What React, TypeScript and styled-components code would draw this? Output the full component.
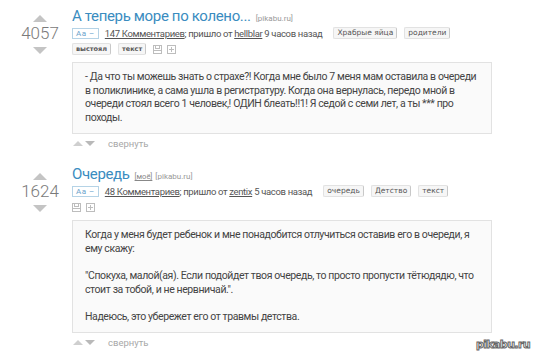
import React from "react";
import styled, { createGlobalStyle } from "styled-components";

const GlobalStyle = createGlobalStyle`
  html, body {
    margin: 0;
    padding: 0;
    background: #fff;
  }
  body {
    font-family: Roboto, "Liberation Sans", Arial, sans-serif;
    width: 535px;
    height: 357px;
    overflow: hidden;
  }
`;

type Tag = { label: string; bold?: boolean };

type PostData = {
  rating: string;
  title: string;
  mine?: boolean;
  comments: string;
  author: string;
  time: string;
  tags: Tag[];
  extraTags: Tag[];
  paragraphs: string[];
};

const posts: PostData[] = [
  {
    rating: "4057",
    title: "А теперь море по колено...",
    comments: "147 Комментариев",
    author: "hellblar",
    time: "9 часов назад",
    tags: [{ label: "Храбрые яйца" }, { label: "родители" }],
    extraTags: [{ label: "выстоял", bold: true }, { label: "текст", bold: true }],
    paragraphs: [
      "- Да что ты можешь знать о страхе?! Когда мне было 7 меня мам оставила в очереди в поликлинике, а сама ушла в регистратуру. Когда она вернулась, передо мной в очереди стоял всего 1 человек,! ОДИН блеать!!1! Я седой с семи лет, а ты *** про походы.",
    ],
  },
  {
    rating: "1624",
    title: "Очередь",
    mine: true,
    comments: "48 Комментариев",
    author: "zentix",
    time: "5 часов назад",
    tags: [{ label: "очередь" }, { label: "Детство" }, { label: "текст" }],
    extraTags: [],
    paragraphs: [
      "Когда у меня будет ребенок и мне понадобится отлучиться оставив его в очереди, я ему скажу:",
      "\"Спокуха, малой(ая). Если подойдет твоя очередь, то просто пропусти тётюдядю, что стоит за тобой, и не нервничай.\".",
      "Надеюсь, это убережет его от травмы детства.",
    ],
  },
];

const SaveIcon = () => (
  <svg width="9" height="9" viewBox="0 0 9 9">
    <rect x="0.5" y="0.5" width="8" height="8" fill="none" stroke="#bdbdbd" />
    <rect x="2.5" y="0.5" width="4" height="3" fill="none" stroke="#bdbdbd" />
    <line x1="0.5" y1="5.5" x2="8.5" y2="5.5" stroke="#bdbdbd" />
  </svg>
);

const PlusIcon = () => (
  <svg width="9" height="9" viewBox="0 0 9 9">
    <rect x="0.5" y="0.5" width="8" height="8" fill="none" stroke="#bdbdbd" />
    <line x1="4.5" y1="2" x2="4.5" y2="7" stroke="#bdbdbd" />
    <line x1="2" y1="4.5" x2="7" y2="4.5" stroke="#bdbdbd" />
  </svg>
);

const Post: React.FC<{ post: PostData }> = ({ post }) => (
  <PostWrapper>
    <Rating>
      <ArrowUp />
      <Score>{post.rating}</Score>
      <ArrowDown />
    </Rating>
    <Body>
      <TitleRow>
        <Title>{post.title}</Title>
        {post.mine && <Mine>[моё]</Mine>}
        <Source>[pikabu.ru]</Source>
      </TitleRow>
      <MetaRow>
        <FontBadge>Aa –</FontBadge>
        <Meta>
          <MetaLink>{post.comments}</MetaLink>; пришло от <MetaLink>{post.author}</MetaLink> {post.time}
        </Meta>
        <Tags>
          {post.tags.map((t) => (
            <TagItem key={t.label} bold={t.bold}>{t.label}</TagItem>
          ))}
        </Tags>
      </MetaRow>
      <ExtraRow>
        {post.extraTags.map((t) => (
          <TagItem key={t.label} bold={t.bold}>{t.label}</TagItem>
        ))}
        <Icons>
          <SaveIcon />
          <PlusIcon />
        </Icons>
      </ExtraRow>
      <Content>
        {post.paragraphs.map((p, i) => (
          <Paragraph key={i}>{p}</Paragraph>
        ))}
      </Content>
      <Footer>
        <SmallUp />
        <SmallDown />
        <Collapse>свернуть</Collapse>
      </Footer>
    </Body>
  </PostWrapper>
);

const App: React.FC = () => (
  <>
    <GlobalStyle />
    <Page>
      {posts.map((p) => (
        <Post key={p.rating} post={p} />
      ))}
      <Watermark>pikabu.ru</Watermark>
    </Page>
  </>
);

const Page = styled.div`
  position: relative;
  width: 535px;
  height: 357px;
  padding-top: 6px;
  box-sizing: border-box;
  display: flex;
  flex-direction: column;
  gap: 15px;
`;

const PostWrapper = styled.div`
  display: flex;
`;

const Rating = styled.div`
  width: 64px;
  margin-left: 8px;
  display: flex;
  flex-direction: column;
  align-items: center;
  padding-top: 9px;
`;

const ArrowUp = styled.div`
  width: 0;
  height: 0;
  border-left: 7px solid transparent;
  border-right: 7px solid transparent;
  border-bottom: 7px solid #c4c4c4;
`;

const ArrowDown = styled.div`
  width: 0;
  height: 0;
  margin-top: 4px;
  border-left: 7px solid transparent;
  border-right: 7px solid transparent;
  border-top: 7px solid #c4c4c4;
`;

const Score = styled.div`
  font-size: 17px;
  font-weight: 300;
  line-height: 20px;
  color: #7a7a7a;
  margin-top: 1px;
`;

const Body = styled.div`
  flex: 1;
  display: flex;
  flex-direction: column;
  padding-right: 43px;
`;

const TitleRow = styled.div`
  display: flex;
  align-items: baseline;
  gap: 5px;
  height: 21px;
`;

const Title = styled.span`
  font-size: 15px;
  letter-spacing: -0.35px;
  color: #3a8cc0;
  line-height: 21px;
`;

const Mine = styled.span`
  font-size: 7.5px;
  color: #888;
  text-decoration: underline;
  margin-right: -2px;
`;

const Source = styled.span`
  font-size: 8px;
  color: #999;
`;

const MetaRow = styled.div`
  display: flex;
  align-items: center;
  height: 12px;
`;

const FontBadge = styled.span`
  font-size: 8px;
  color: #6aa3cc;
  border: 1px solid #b5d3e6;
  padding: 0 3px;
  height: 9px;
  line-height: 9px;
  letter-spacing: 0.5px;
  margin-right: 6px;
`;

const Meta = styled.span`
  font-size: 9.5px;
  letter-spacing: -0.35px;
  color: #555;
  white-space: nowrap;
`;

const MetaLink = styled.span`
  text-decoration: underline;
`;

const Tags = styled.span`
  display: flex;
  gap: 7px;
  margin-left: 11px;
`;

const TagItem = styled.span<{ bold?: boolean }>`
  font-family: "DejaVu Sans", Verdana, sans-serif;
  font-size: ${(p) => (p.bold ? "6.5px" : "7.5px")};
  font-weight: ${(p) => (p.bold ? "bold" : "normal")};
  color: #555;
  background: #f6f6f6;
  border: 1px solid #e2e2e2;
  border-right-color: #c8c8c8;
  border-radius: 2px;
  padding: 0 3px;
  height: 10px;
  line-height: 10px;
  white-space: nowrap;
`;

const ExtraRow = styled.div`
  display: flex;
  align-items: center;
  gap: 7px;
  height: 12px;
  margin-top: 4px;
`;

const Icons = styled.span`
  display: flex;
  gap: 5px;
`;

const Content = styled.div`
  margin-top: 7px;
  background: #fafafa;
  border: 1px solid #e2e2e2;
  padding: 7px 11px 9px 12px;
  display: flex;
  flex-direction: column;
  gap: 13.5px;
`;

const Paragraph = styled.p`
  margin: 0;
  font-size: 10.5px;
  letter-spacing: -0.4px;
  line-height: 13.6px;
  color: #444;
`;

const Footer = styled.div`
  display: flex;
  align-items: center;
  height: 12px;
  margin-top: 3px;
  padding-left: 1px;
`;

const SmallUp = styled.div`
  width: 0;
  height: 0;
  border-left: 5px solid transparent;
  border-right: 5px solid transparent;
  border-bottom: 5px solid #cfcfcf;
`;

const SmallDown = styled.div`
  width: 0;
  height: 0;
  margin-left: 2px;
  border-left: 5px solid transparent;
  border-right: 5px solid transparent;
  border-top: 5px solid #b9b9b9;
`;

const Collapse = styled.span`
  font-size: 9.5px;
  color: #a8a8a8;
  margin-left: 13px;
`;

const Watermark = styled.div`
  position: absolute;
  right: 5px;
  bottom: 6px;
  font-family: "DejaVu Sans", sans-serif;
  font-weight: bold;
  font-size: 11px;
  letter-spacing: -0.6px;
  color: #fff;
  -webkit-text-stroke: 1px #666;
`;

export default App;
